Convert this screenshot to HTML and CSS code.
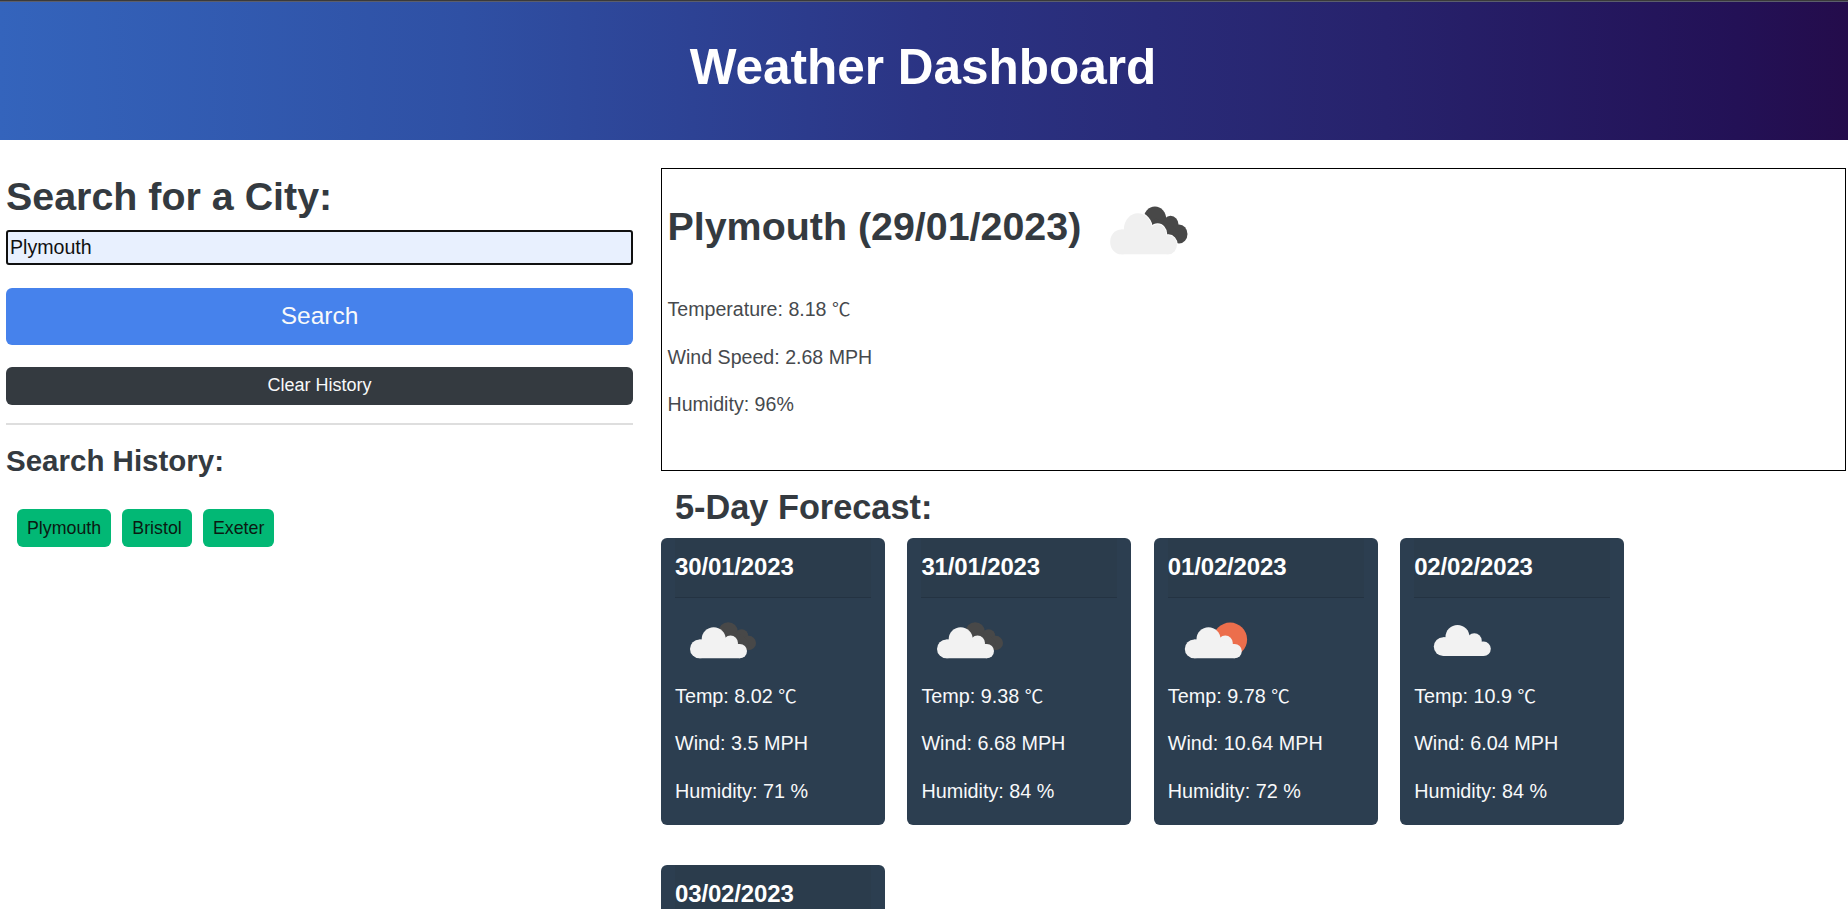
FILE: index.html
```
<!DOCTYPE html>
<html lang="en">
<head>
<meta charset="utf-8">
<title>Weather Dashboard</title>
<link rel="stylesheet" href="styles.css">
</head>
<body>
<svg class="defs" width="0" height="0" aria-hidden="true">
  <symbol id="cloud" viewBox="0 0 100 100" overflow="visible">
    <circle cx="23.7" cy="12" r="12"/><circle cx="40.5" cy="15.8" r="7.5"/>
    <circle cx="49.8" cy="23.8" r="7.2"/><circle cx="9.4" cy="21.6" r="9.4"/>
    <path d="M9.4 12.2 L20 12 L40 15 L49.8 17 V31 H9.4Z"/>
  </symbol>
  <symbol id="dark" viewBox="0 0 100 100" overflow="visible">
    <circle cx="38.2" cy="4.6" r="9.7"/><circle cx="51.6" cy="8.7" r="6.8"/><circle cx="58.8" cy="15.7" r="7.2"/>
    <path d="M38 4 L52 8 L59 15 L57 22 L44 16Z"/>
  </symbol>
</svg>
<header class="hero"><h1>Weather Dashboard</h1></header>
<main class="layout">
  <aside class="side">
    <h2 class="title">Search for a City:</h2>
    <input class="field" type="text" value="Plymouth" aria-label="City">
    <button class="btn search">Search</button>
    <button class="btn clear">Clear History</button>
    <hr>
    <h3 class="subtitle">Search History:</h3>
    <div class="history"><button>Plymouth</button><button>Bristol</button><button>Exeter</button></div>
  </aside>
  <section class="content">
    <article class="today">
      <div class="today-head">
        <h2 class="title">Plymouth (29/01/2023)</h2>
        <svg class="icon-lg" viewBox="-1 -7 70 40" preserveAspectRatio="none"><use href="#dark" width="100" height="100" class="dark"/><use href="#cloud" width="100" height="100" class="gap"/><use href="#cloud" width="100" height="100" class="cloud pale"/></svg>
      </div>
      <p>Temperature: 8.18 <span class="deg">℃</span></p>
      <p>Wind Speed: 2.68 MPH</p>
      <p>Humidity: 96%</p>
    </article>
    <h2 class="forecast-title">5-Day Forecast:</h2>
    <div class="cards">
      <article class="card">
        <h4>30/01/2023</h4>
        <svg class="icon" viewBox="-1 -7.3 70 40"><use href="#dark" width="100" height="100" class="dark"/><use href="#cloud" width="100" height="100" class="cloud"/></svg>
        <p>Temp: 8.02 <span class="deg">℃</span></p><p>Wind: 3.5 MPH</p><p>Humidity: 71 %</p>
      </article>
      <article class="card">
        <h4>31/01/2023</h4>
        <svg class="icon" viewBox="-2 -7.3 70 40"><use href="#dark" width="100" height="100" class="dark"/><use href="#cloud" width="100" height="100" class="cloud"/></svg>
        <p>Temp: 9.38 <span class="deg">℃</span></p><p>Wind: 6.68 MPH</p><p>Humidity: 84 %</p>
      </article>
      <article class="card">
        <h4>01/02/2023</h4>
        <svg class="icon" viewBox="-2.8 -7.3 70 40"><circle cx="45.3" cy="12.3" r="17" class="sun"/><use href="#cloud" width="100" height="100" class="cloud"/></svg>
        <p>Temp: 9.78 <span class="deg">℃</span></p><p>Wind: 10.64 MPH</p><p>Humidity: 72 %</p>
      </article>
      <article class="card">
        <h4>02/02/2023</h4>
        <svg class="icon" viewBox="-5.8 -5 70 40"><use href="#cloud" width="100" height="100" class="cloud"/></svg>
        <p>Temp: 10.9 <span class="deg">℃</span></p><p>Wind: 6.04 MPH</p><p>Humidity: 84 %</p>
      </article>
      <article class="card">
        <h4>03/02/2023</h4>
      </article>
    </div>
  </section>
</main>
</body>
</html>
```
FILE: styles.css
```
* { box-sizing: border-box; }
body {
  margin: 0;
  height: 909px;
  overflow: hidden;
  background: #fff;
  color: #343a40;
  font-family: "Liberation Sans", Arial, sans-serif;
  font-size: 20px;
}
h1, h2, h3, h4, p { margin: 0; }
.defs { position: absolute; }
.hero {
  height: 140px;
  border-top: 1px solid #3a3a3a;
  background: linear-gradient(to right, #3464bc 0%, #2f50a4 25%, #2b3484 50%, #27226c 75%, #231156 94%, #240c4b 100%);
  box-shadow: inset 0 1px #5b5e6c;
  text-align: center;
}
h1 {
  padding-top: 38px;
  font-size: 49.5px;
  line-height: 56px;
  color: #fff;
  text-indent: -2px;
}
.layout { display: flex; padding: 28px 2px 0 6px; }
.side { width: 627px; margin-right: 28px; flex: none; }
.title { font-size: 39.4px; line-height: 48px; }
.side .title { padding-top: 4px; height: 62px; }
.field {
  display: block;
  width: 100%;
  height: 35px;
  padding: 0 2px;
  border: 2px solid #101010;
  border-radius: 3px;
  background: #e8f0fe;
  color: #101010;
  font: 19.6px "Liberation Sans", Arial, sans-serif;
}
.btn {
  display: block;
  width: 100%;
  padding: 0 0 2px;
  border: 0;
  border-radius: 6px;
  color: #f8f9fa;
  font-family: inherit;
}
.search { height: 57px; margin-top: 23px; background: #4682ec; font-size: 24.5px; }
.clear { height: 38px; margin-top: 22px; background: #343a40; font-size: 18px; }
hr { margin: 18px 0 0; border: 0; height: 2px; background: #dedede; }
.subtitle { margin-top: 18px; font-size: 29.5px; line-height: 36px; }
.history { display: flex; gap: 11.2px; margin: 30px 0 0 11px; }
.history button {
  height: 38px;
  padding: 0 10px;
  border: 0;
  border-radius: 6px;
  background: #02b875;
  color: #0b1a12;
  font: 17.8px "Liberation Sans", Arial, sans-serif;
}
.content { flex: 1; min-width: 0; }
.today { height: 303px; border: 1px solid #000; padding: 7px 5.5px 0; }
.today-head { display: flex; height: 118px; padding-top: 26px; }
.icon-lg { width: 82px; height: 53px; margin: 2px 0 0 28px; }
.today p { height: 47.5px; line-height: 30px; font-size: 19.6px; color: #46494d; }
.forecast-title { padding-left: 14px; margin-top: 15px; height: 52px; line-height: 42px; font-size: 34.3px; }
.cards { display: flex; flex-wrap: wrap; width: 1000px; gap: 40px 22.4px; }
.card {
  width: 224px;
  height: 287px;
  padding: 0 14px;
  border-radius: 6px;
  background: #2c3e50;
  color: #f8f9fa;
}
.card h4 {
  height: 60px;
  padding-top: 14px;
  border-bottom: 1px solid #243342;
  background: #2b3c4c;
  font-size: 24px;
  line-height: 30px;
  letter-spacing: -0.15px;
  color: #fff;
}
.icon { display: block; width: 70px; height: 40px; margin: 22px 0 21px 14px; }
.card p { height: 47.3px; line-height: 30px; font-size: 19.8px; }
.cloud { fill: #f2f2f2; }
.pale { fill: #f0f0f0; }
.gap { fill: #fff; stroke: #fff; stroke-width: 1.4; }
.dark { fill: #484848; }
.sun { fill: #ec6e4c; }
.deg { font-family: "Noto Sans CJK JP", sans-serif; font-size: 18.5px; line-height: 1; }
```
